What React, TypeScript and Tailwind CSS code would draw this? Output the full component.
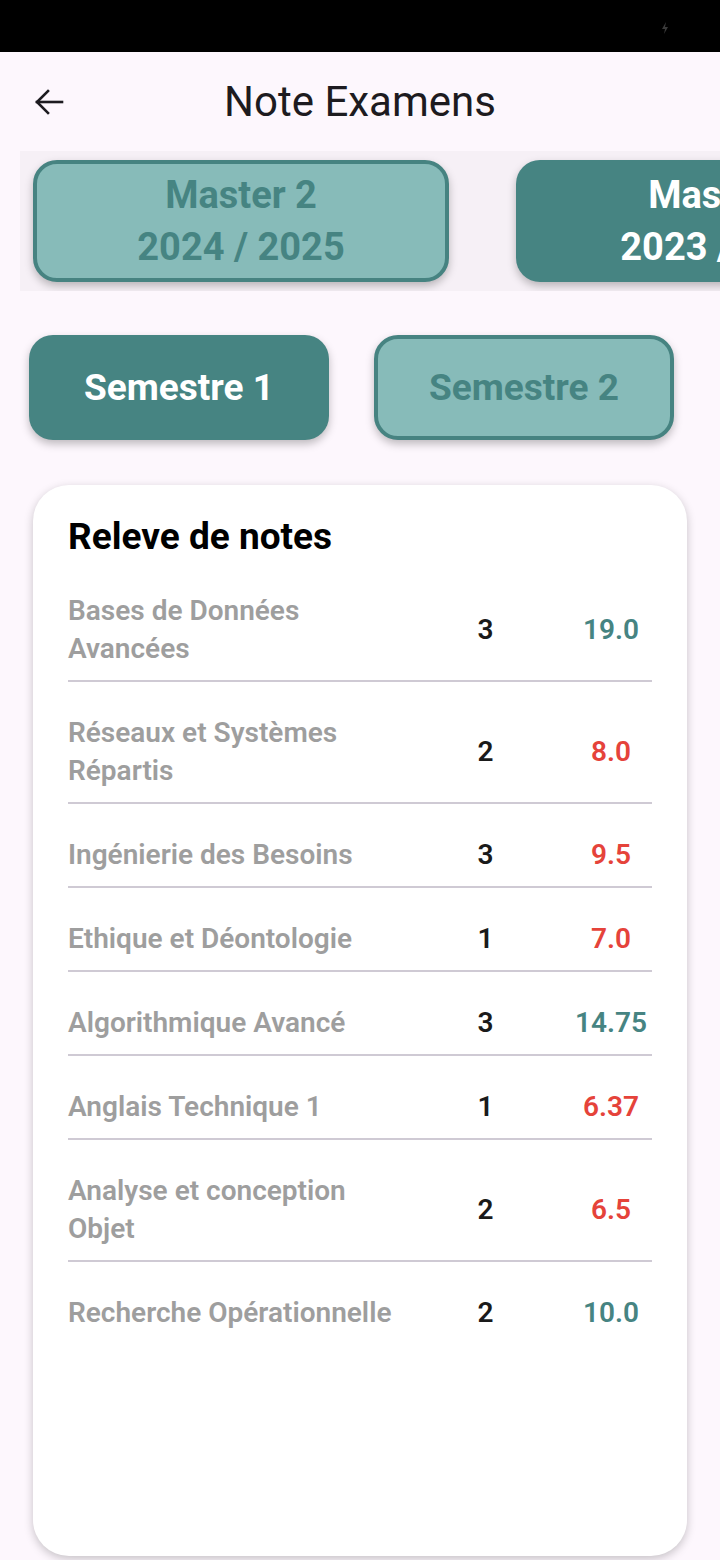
import React from 'react';

interface Grade {
    name: string;
    coef: number;
    note: string;
    pass: boolean;
}

const grades: Grade[] = [
    { name: 'Bases de Données Avancées', coef: 3, note: '19.0', pass: true },
    { name: 'Réseaux et Systèmes Répartis', coef: 2, note: '8.0', pass: false },
    { name: 'Ingénierie des Besoins', coef: 3, note: '9.5', pass: false },
    { name: 'Ethique et Déontologie', coef: 1, note: '7.0', pass: false },
    { name: 'Algorithmique Avancé', coef: 3, note: '14.75', pass: true },
    { name: 'Anglais Technique 1', coef: 1, note: '6.37', pass: false },
    { name: 'Analyse et conception Objet', coef: 2, note: '6.5', pass: false },
    { name: 'Recherche Opérationnelle', coef: 2, note: '10.0', pass: true },
];

const BackArrow = () => (
    <svg width="30" height="30" viewBox="0 0 30 30" fill="none" stroke="#1d1b20" strokeWidth="2.6" strokeLinecap="square">
        <path d="M28 15H3" />
        <path d="M14 4L3 15l11 11" />
    </svg>
);

const App: React.FC = () => {
    return (
        <div className="w-[720px] h-[1560px] overflow-hidden bg-[#fdf7fd] font-['Roboto',sans-serif]">
            {/* Status bar */}
            <div className="h-[52px] bg-black flex items-center justify-end pr-[51px]">
                <svg width="8" height="12" viewBox="0 0 8 12" className="mt-1">
                    <path d="M5 0L1 7h3l-1 5 4-7H4z" fill="#3a3a3a" />
                </svg>
            </div>

            {/* App bar */}
            <div className="relative h-[99px] flex items-center justify-center">
                <div className="absolute left-[34px] top-[35px]">
                    <BackArrow />
                </div>
                <h1 className="text-[42px] leading-[50px] text-[#1d1b20]">Note Examens</h1>
            </div>

            {/* Year selector */}
            <div className="ml-5 h-[140px] bg-[#f6f0f6] flex items-center gap-[67px] pl-[13px] overflow-hidden">
                <div className="shrink-0 w-[416px] h-[122px] rounded-[24px] border-[4px] border-[#468381] bg-[#87bbb9] flex flex-col items-center justify-center shadow-[0_4px_8px_rgba(0,0,0,0.25)]">
                    <span className="text-[38px] leading-[52px] font-bold text-[#468482]">Master 2</span>
                    <span className="text-[38px] leading-[52px] font-bold text-[#468482]">2024 / 2025</span>
                </div>
                <div className="shrink-0 w-[416px] h-[122px] rounded-[24px] bg-[#468482] flex flex-col items-center justify-center shadow-[0_4px_8px_rgba(0,0,0,0.25)]">
                    <span className="text-[38px] leading-[52px] font-bold text-white">Master 1</span>
                    <span className="text-[38px] leading-[52px] font-bold text-white">2023 / 2024</span>
                </div>
            </div>

            {/* Semester buttons */}
            <div className="flex gap-[45px] pl-[29px] mt-[44px]">
                <button className="w-[300px] h-[105px] rounded-[24px] bg-[#468482] text-white text-[37px] font-bold shadow-[0_4px_8px_rgba(0,0,0,0.25)]">
                    Semestre 1
                </button>
                <button className="w-[300px] h-[105px] rounded-[24px] border-[4px] border-[#468381] bg-[#87bbb9] text-[#468482] text-[37px] font-bold shadow-[0_4px_8px_rgba(0,0,0,0.25)]">
                    Semestre 2
                </button>
            </div>

            {/* Grades card */}
            <div className="mx-[33px] mt-[45px] h-[1071px] rounded-[36px] bg-white shadow-[0_3px_10px_rgba(0,0,0,0.22)] px-[35px] pt-[32px]">
                <h2 className="text-[37px] leading-[40px] font-bold text-black">Releve de notes</h2>
                <div className="mt-[35px]">
                    {grades.map((g, i) => (
                        <div
                            key={g.name}
                            className={`grid grid-cols-[345px_145px_1fr] items-center pb-[12px] ${i > 0 ? 'pt-[32px]' : 'pt-0'} ${i < grades.length - 1 ? 'border-b-2 border-[#cfcad4]' : ''}`}
                        >
                            <span className="text-[28px] leading-[38px] font-semibold text-[#9e9e9e]">{g.name}</span>
                            <span className="text-[28px] leading-[38px] font-semibold text-[#1a1a1a] text-center">{g.coef}</span>
                            <span className={`text-[28px] leading-[38px] font-semibold text-center pl-[12px] ${g.pass ? 'text-[#468482]' : 'text-[#e5433a]'}`}>
                                {g.note}
                            </span>
                        </div>
                    ))}
                </div>
            </div>
        </div>
    );
};

export default App;
